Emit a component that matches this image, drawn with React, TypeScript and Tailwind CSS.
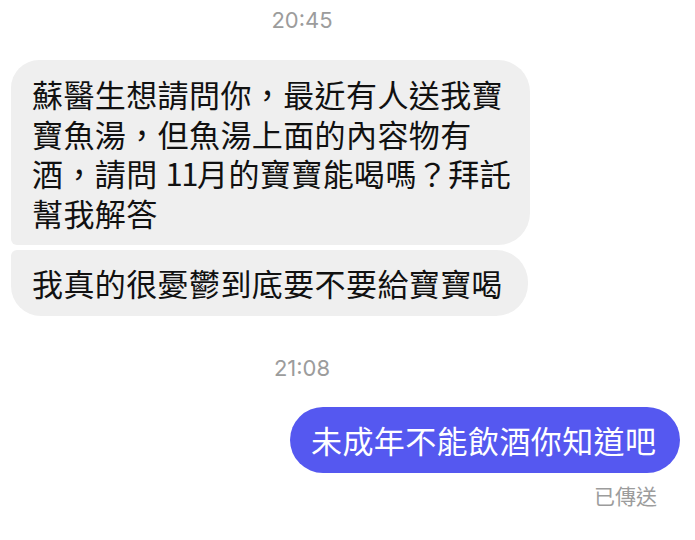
const cjk = "font-['Noto_Sans_CJK_TC','Noto_Sans_CJK_SC',sans-serif]";

function Stamp({ time, className }: { time: string; className: string }) {
  return (
    <div className={`w-[604px] text-center font-['Inter',sans-serif] text-[22px] leading-[26px] text-[#9c9c9c] ${className}`}>
      {time}
    </div>
  );
}

export default function App() {
  return (
    <div className={`w-[695px] h-[540px] bg-white flex flex-col ${cjk}`}>
      <Stamp time="20:45" className="mt-[7px]" />

      <div className="ml-[11px] mt-[27px] w-[519px] bg-[#efefef] rounded-tl-[28px] rounded-tr-[32px] rounded-br-[32px] rounded-bl-[6px] pl-[21px] pt-[14px] pb-[13px] text-[31px] tracking-[0.4px] leading-[39.5px] text-[#111]">
        <div className="whitespace-nowrap">蘇醫生想請問你，最近有人送我寶</div>
        <div className="whitespace-nowrap">寶魚湯，但魚湯上面的內容物有</div>
        <div className="whitespace-nowrap">
          酒，請問<span className="ml-[8px] tracking-[-1.5px]">11</span>月的寶寶能喝嗎？拜託
        </div>
        <div className="whitespace-nowrap">幫我解答</div>
      </div>

      <div className="ml-[11px] mt-[5px] w-[517px] bg-[#efefef] rounded-tl-[6px] rounded-tr-[32px] rounded-br-[32px] rounded-bl-[30px] pl-[21px] py-[13px] text-[31px] tracking-[0.4px] leading-[39.5px] text-[#111] whitespace-nowrap">
        我真的很憂鬱到底要不要給寶寶喝
      </div>

      <Stamp time="21:08" className="mt-[39px]" />

      <div className="self-end mr-[15px] mt-[26px] w-[390px] bg-[#5558f0] rounded-full pl-[21px] pt-[13px] pb-[13.5px] text-[31px] tracking-[0.4px] leading-[39.5px] text-white whitespace-nowrap">
        未成年不能飲酒你知道吧
      </div>

      <div className="self-end mr-[38px] mt-[10px] text-[21px] leading-[24px] text-[#9c9c9c]">
        已傳送
      </div>
    </div>
  );
}
